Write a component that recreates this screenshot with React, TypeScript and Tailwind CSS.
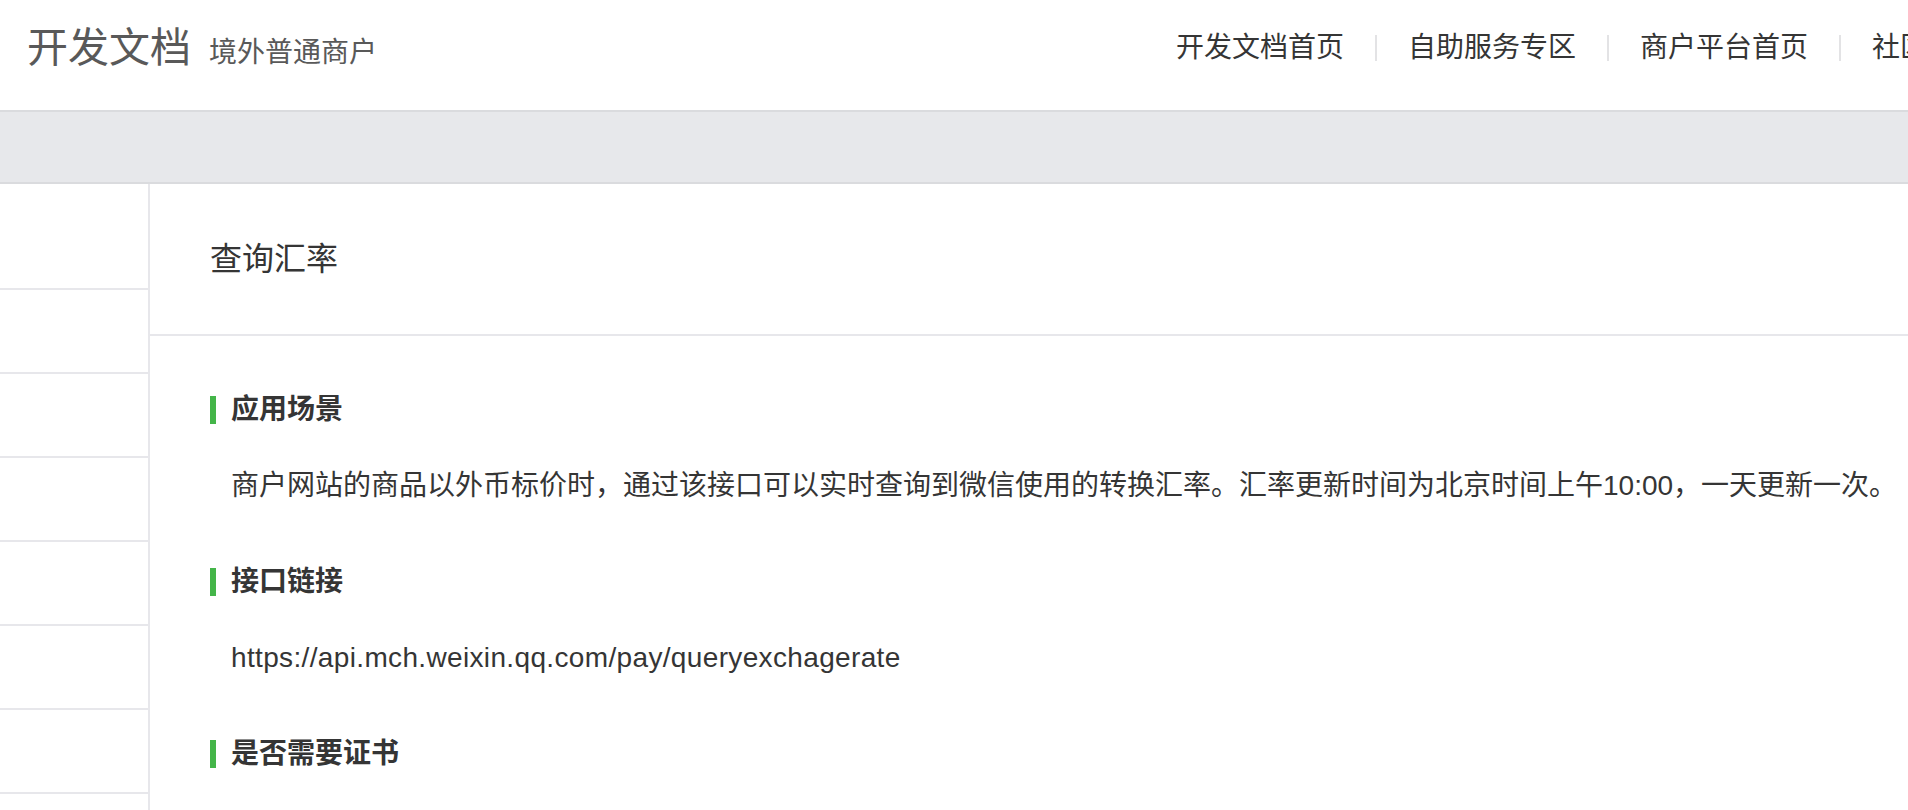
import React from 'react';

const navItems = ['开发文档首页', '自助服务专区', '商户平台首页', '社区'];

const sections = [
  {
    title: '应用场景',
    body: '商户网站的商品以外币标价时，通过该接口可以实时查询到微信使用的转换汇率。汇率更新时间为北京时间上午10:00，一天更新一次。',
    url: false,
  },
  {
    title: '接口链接',
    body: 'https://api.mch.weixin.qq.com/pay/queryexchagerate',
    url: true,
  },
  {
    title: '是否需要证书',
    body: '不需要',
    url: false,
  },
];

function Header() {
  return (
    <header className="h-[110px] flex items-center pb-[14px] pl-[27px] bg-white">
      <div className="w-[1118px] shrink-0 flex items-baseline text-[#595959]">
        <span className="text-[41px] leading-none">开发文档</span>
        <span className="ml-[18px] text-[28px] leading-none">境外普通商户</span>
      </div>
      <nav className="flex items-center shrink-0 whitespace-nowrap">
        {navItems.map((item, i) => (
          <React.Fragment key={item}>
            {i > 0 && <span className="w-[2px] h-[26px] bg-[#e3e3e5]" />}
            <a href="#" className="px-[31px] text-[28px] leading-none text-[#353535]">
              {item}
            </a>
          </React.Fragment>
        ))}
      </nav>
    </header>
  );
}

function Sidebar() {
  const rows = [106, 84, 84, 84, 84, 84, 84, 84];
  return (
    <aside className="w-[150px] shrink-0 border-r-2 border-[#e7e7eb]">
      {rows.map((h, i) => (
        <div
          key={i}
          className={
            i === 0
              ? 'h-[106px] border-b-2 border-[#e7e7eb]'
              : 'h-[84px] border-b-2 border-[#e7e7eb]'
          }
        />
      ))}
    </aside>
  );
}

function Content() {
  return (
    <main className="flex-1 min-w-0">
      <div className="h-[152px] flex items-center pl-[60px] border-b-2 border-[#e7e7eb]">
        <h1 className="text-[32px] leading-none text-[#353535] font-normal">查询汇率</h1>
      </div>
      <div className="pl-[60px] pt-[60px]">
        {sections.map((s, i) => (
          <section key={s.title} className={i > 0 ? 'mt-[58px]' : ''}>
            <h2 className="h-[28px] border-l-[6px] border-[#44b549] pl-[15px] text-[28px] leading-[28px] font-bold text-[#353535]">
              {s.title}
            </h2>
            <p
              className={
                s.url
                  ? 'mt-[38px] pl-[21px] text-[28px] leading-[48px] text-[#353535] whitespace-nowrap tracking-[0.35px]'
                  : 'mt-[38px] pl-[21px] text-[28px] leading-[48px] text-[#353535] whitespace-nowrap'
              }
            >
              {s.body}
            </p>
          </section>
        ))}
      </div>
    </main>
  );
}

export default function App() {
  return (
    <div
      className="w-full h-[810px] overflow-hidden bg-white"
      style={{ fontFamily: '"Liberation Sans", "Noto Sans CJK SC", sans-serif' }}
    >
      <Header />
      <div className="h-[74px] bg-[#e7e8eb] border-y-2 border-[#dadbde]" />
      <div className="flex">
        <Sidebar />
        <Content />
      </div>
    </div>
  );
}
